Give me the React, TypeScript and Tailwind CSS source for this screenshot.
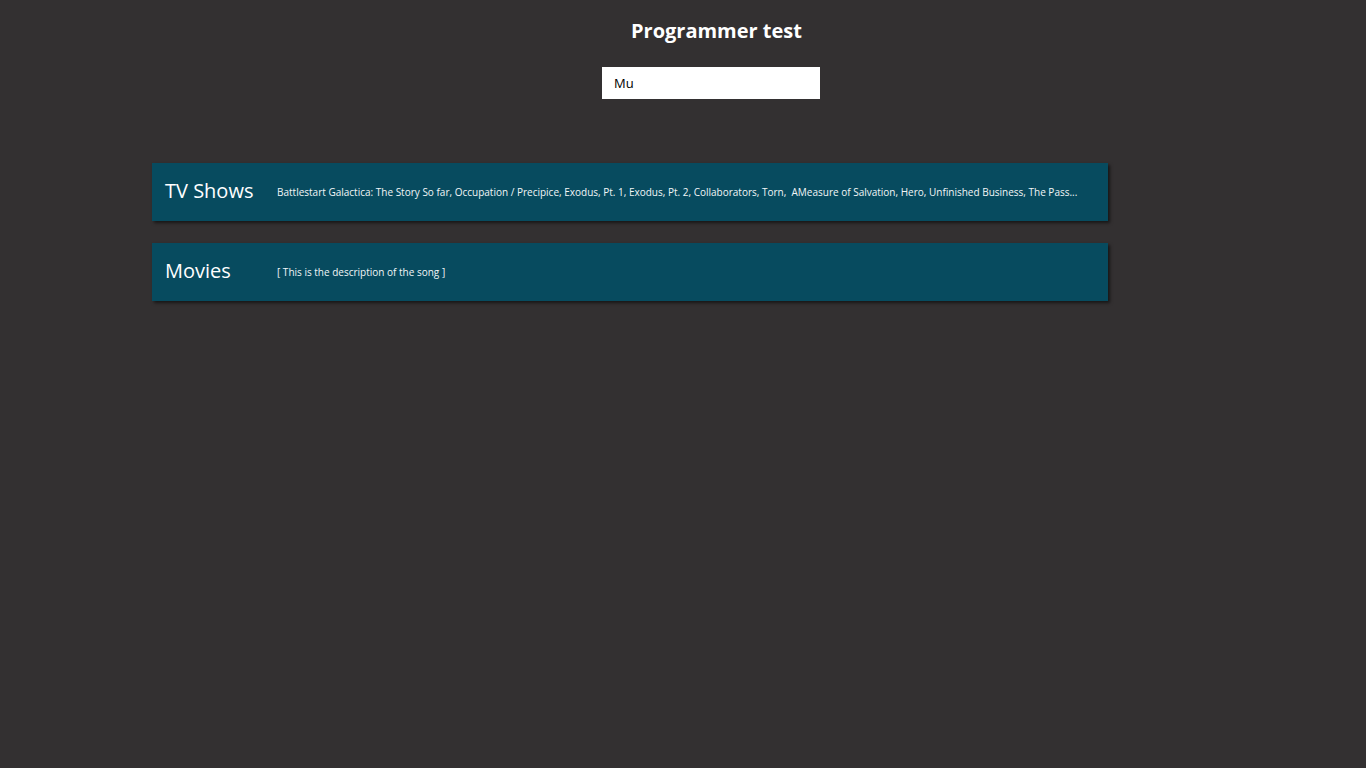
import React from "react"

const categories = [
  {
    title: "TV Shows",
    description:
      "Battlestart Galactica: The Story So far, Occupation / Precipice, Exodus, Pt. 1, Exodus, Pt. 2, Collaborators, Torn,  AMeasure of Salvation, Hero, Unfinished Business, The Pass...",
  },
  {
    title: "Movies",
    description: "[ This is the description of the song ]",
  },
]

export default function App() {
  return (
    <div
      className="min-h-screen bg-[#333031] text-white"
      style={{ fontFamily: '"Open Sans", "Noto Sans", sans-serif' }}
    >
      {/* Header */}
      <h1 className="pt-[17px] ml-[631px] text-[20px] leading-[28px] font-bold">Programmer test</h1>
      <input
        defaultValue="Mu"
        className="block mt-[22px] ml-[602px] w-[218px] h-[32px] bg-white text-black text-[13px] px-[12px] outline-none"
      />

      {/* Results */}
      <div className="mt-[64px] ml-[152px] w-[956px] flex flex-col gap-[22px]">
        {categories.map((cat, index) => (
          <div
            key={index}
            className="h-[58px] flex items-center bg-[#074b5f] pl-[13px] pr-[20px] shadow-[2px_2px_3px_rgba(0,0,0,0.55)]"
          >
            <h2 className="w-[112px] shrink-0 text-[20px] leading-none font-normal -mt-[2px]">{cat.title}</h2>
            <p className="text-[10px] whitespace-pre text-[#f2f6f7]">{cat.description}</p>
          </div>
        ))}
      </div>
    </div>
  )
}
